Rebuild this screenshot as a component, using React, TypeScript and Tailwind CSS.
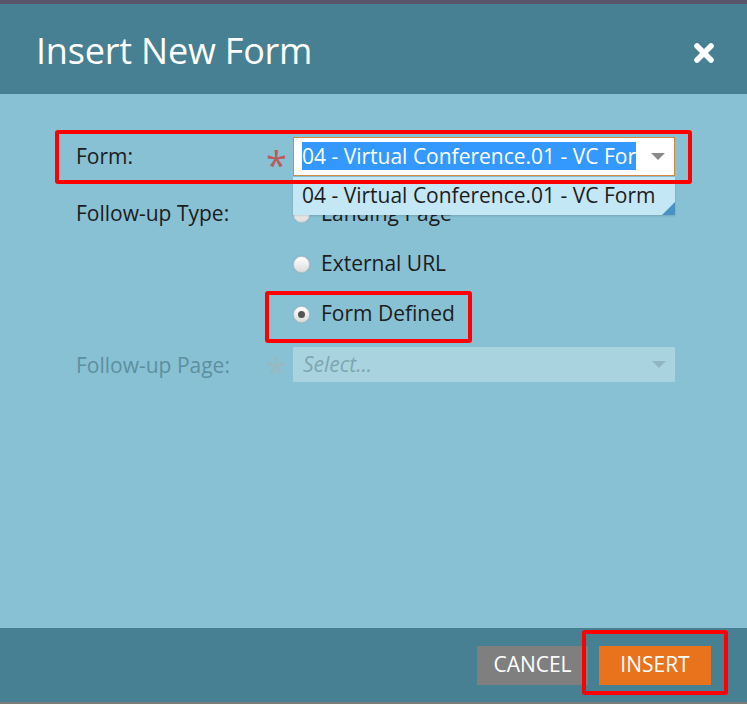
import React from "react";

function Radio({ checked }: { checked?: boolean }) {
  return (
    <div className="w-[17px] h-[17px] rounded-full border border-[#b8c4c8] bg-gradient-to-b from-white to-[#dcdcdc] flex items-center justify-center shadow-[0_0_1px_rgba(0,0,0,0.2)]">
      {checked && <div className="w-[7px] h-[7px] rounded-full bg-[#555]" />}
    </div>
  );
}

function Arrow({ color }: { color: string }) {
  return (
    <svg width="14" height="7" viewBox="0 0 14 7">
      <polygon points="0,0 14,0 7,7" fill={color} />
    </svg>
  );
}

export default function App() {
  const font = { fontFamily: '"Open Sans", "Noto Sans", sans-serif' };
  return (
    <div className="relative w-[747px] h-[704px] flex flex-col overflow-hidden" style={font}>
      <div className="h-[4px] bg-[#5a546a]" />
      <div className="h-[90px] bg-[#468092] flex items-center justify-between pl-[36px] pr-[32px]">
        <div className="text-white text-[36px] leading-none pt-[3px] tracking-[-0.2px]">Insert New Form</div>
        <svg width="22" height="22" viewBox="0 0 22 22" className="mt-[7px]">
          <line x1="4" y1="4" x2="18" y2="18" stroke="white" strokeWidth="5.5" strokeLinecap="round" />
          <line x1="18" y1="4" x2="4" y2="18" stroke="white" strokeWidth="5.5" strokeLinecap="round" />
        </svg>
      </div>
      <div className="flex-1 bg-[#88c1d3] pt-[43px] pl-[76px] text-[21px] text-[#1c1c1c]">
        <div className="grid grid-cols-[190px_27px_382px]">
          {/* Form row */}
          <div className="h-[39px] flex items-center">Form:</div>
          <div className="h-[39px] flex items-center text-[#b85c5c] text-[38px] leading-none pt-[14px]">*</div>
          <div className="h-[39px] bg-white border border-[#d4893e] flex items-center justify-between pl-[8px] pr-[9px]">
            <div className="w-[334px] overflow-hidden whitespace-nowrap">
              <span className="bg-[#3399ff] text-white leading-[28px] inline-block">04 - Virtual Conference.01 - VC Form</span>
            </div>
            <Arrow color="#8a8a8a" />
          </div>

          {/* Follow-up type */}
          <div className="h-[50px] mt-[13px] flex items-center">Follow-up Type:</div>
          <div className="mt-[13px]" />
          <div className="mt-[13px] flex flex-col">
            <div className="h-[50px] flex items-center gap-[11px]">
              <Radio />
              <span>Landing Page</span>
            </div>
            <div className="h-[50px] flex items-center gap-[11px]">
              <Radio />
              <span>External URL</span>
            </div>
            <div className="h-[50px] flex items-center gap-[11px]">
              <Radio checked />
              <span>Form Defined</span>
            </div>
          </div>

          {/* Follow-up page */}
          <div className="h-[35px] mt-[8px] flex items-center text-[#5e8f9f] pt-[2px]">Follow-up Page:</div>
          <div className="h-[35px] mt-[8px] flex items-center text-[#9ab8c2] text-[38px] leading-none pt-[12px]">*</div>
          <div className="h-[35px] mt-[8px] bg-[#a9d4df] flex items-center justify-between pl-[10px] pr-[9px]">
            <span className="italic text-[#7ea6b2]">Select...</span>
            <Arrow color="#8fb6c2" />
          </div>
        </div>
      </div>
      <div className="h-[74px] bg-[#468092] flex items-center justify-end gap-[11px] pr-[36px]">
        <div className="w-[111px] h-[39px] bg-[#7f7f7f] text-white text-[21px] flex items-center justify-center">CANCEL</div>
        <div className="w-[112px] h-[39px] bg-[#e8731c] text-white text-[21px] flex items-center justify-center">INSERT</div>
      </div>
      <div className="h-[2px] bg-[#7b7b7b]" />

      {/* Dropdown list overlay */}
      <div className="absolute left-[293px] top-[177px] w-[382px] h-[38px] bg-[#c4e7f6] flex items-center pl-[9px] text-[21px] text-[#1c1c1c] shadow-[0_1px_2px_rgba(0,0,0,0.15)]">
        04 - Virtual Conference.01 - VC Form
        <svg className="absolute right-0 bottom-0" width="13" height="13" viewBox="0 0 13 13">
          <polygon points="13,0 13,13 0,13" fill="#4a92c4" />
        </svg>
      </div>

      {/* Annotation boxes */}
      <div className="absolute left-[55px] top-[130px] w-[637px] h-[54px] border-[4px] border-[#ff0000] rounded-[3px]" />
      <div className="absolute left-[265px] top-[291px] w-[207px] h-[52px] border-[4px] border-[#ff0000] rounded-[3px]" />
      <div className="absolute left-[582px] top-[630px] w-[146px] h-[65px] border-[4px] border-[#ff0000] rounded-[3px]" />
    </div>
  );
}
